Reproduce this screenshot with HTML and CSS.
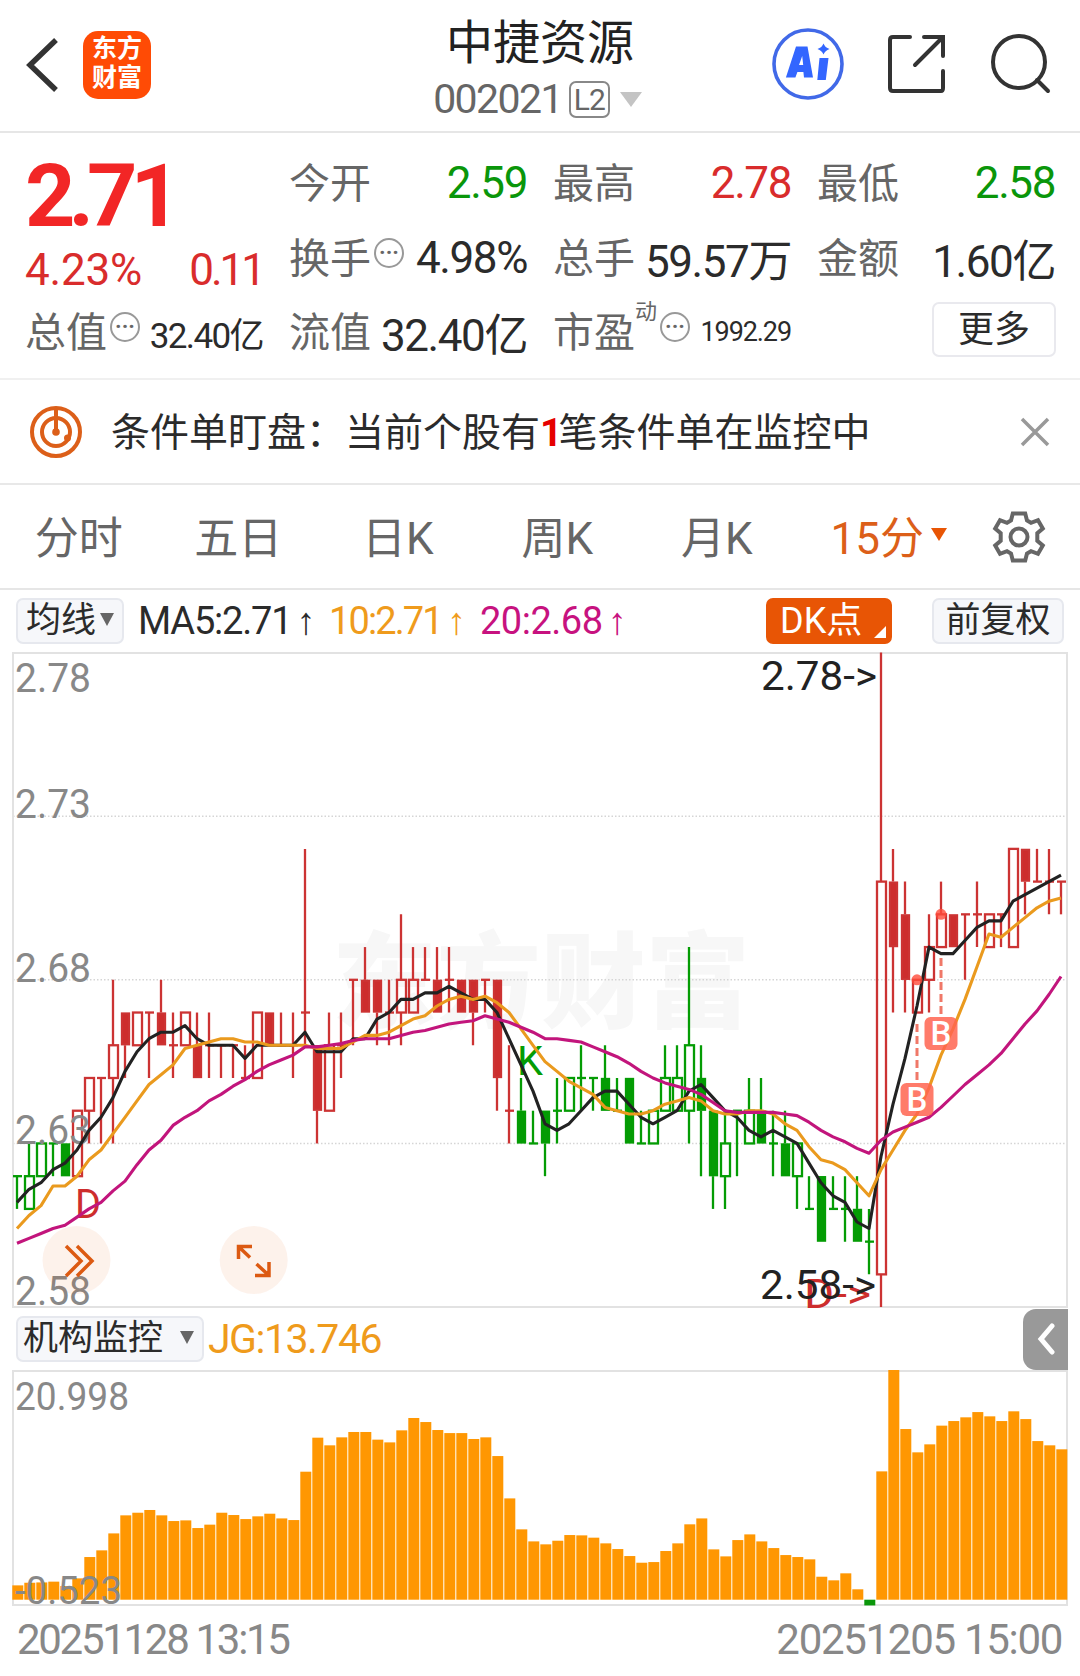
FILE: index.html
```html
<!DOCTYPE html>
<html lang="zh-CN">
<head>
    <meta charset="UTF-8">
    <title>中捷资源 002021</title>
    <meta name="viewport" content="width=device-width, initial-scale=1.0">
    <link rel="stylesheet" href="styles.css">
</head>
<body>
    <header class="header">
        <div class="header-left">
            <svg class="back" width="34" height="56" viewBox="0 0 34 56"><path d="M31 3 L5 28 L31 53"/></svg>
            <div class="logo"><span>东方</span><span>财富</span></div>
        </div>
        <div class="header-title">
            <h1>中捷资源</h1>
            <div class="code"><span class="code-num">002021</span><span class="level">L2</span><i class="tri tri-light"></i></div>
        </div>
        <div class="header-right">
            <svg width="72" height="72" viewBox="0 0 72 72">
                <circle cx="36" cy="36" r="34" fill="none" stroke="#4169e8" stroke-width="3.6"/>
                <path fill="#3366ff" fill-rule="evenodd" d="M24 18.500h11.500l5.500 31h-9l-.6-5.500h-6l-2 5.500h-9.500zM27 37h4.200l-1-9z"/>
                <path fill="#3366ff" d="M47.500 30h9l-2.700 22h-8.500zM51.500 15.500q1.500 4 6 5.500q-4.500 1.500-6 5.500q-1.500-4-6-5.500q4.500-1.500 6-5.500z"/>
            </svg>
            <svg class="line-icon" width="60" height="60" viewBox="0 0 60 60"><path d="M23 3H6Q3 3 3 6V54Q3 57 6 57H54Q56 57 56 54V37M37 3H56V22M55 4L28 31"/></svg>
            <svg class="line-icon" width="62" height="62" viewBox="0 0 62 62"><circle cx="29" cy="29" r="26"/><path d="M47 47L58 58"/></svg>
        </div>
    </header>

    <section class="quote">
        <div class="price">2.71</div>
        <div class="cell"><span class="label">今开</span><b class="green">2.59</b></div>
        <div class="cell"><span class="label">最高</span><b class="red">2.78</b></div>
        <div class="cell"><span class="label">最低</span><b class="green">2.58</b></div>

        <div class="cell change red"><b>4.23%</b><b class="diff">0.11</b></div>
        <div class="cell"><span class="label">换手<i class="more-dot">···</i></span><b>4.98%</b></div>
        <div class="cell"><span class="label">总手</span><b>59.57万</b></div>
        <div class="cell"><span class="label">金额</span><b>1.60亿</b></div>

        <div class="cell"><span class="label">总值<i class="more-dot">···</i></span><b class="mid">32.40亿</b></div>
        <div class="cell"><span class="label">流值</span><b>32.40亿</b></div>
        <div class="cell"><span class="label">市盈<sup>动</sup><i class="more-dot">···</i></span><b class="small">1992.29</b></div>
        <div class="cell end"><button class="more-btn">更多</button></div>
    </section>

    <section class="alert">
        <svg class="alert-icon" width="52" height="52" viewBox="0 0 52 52">
            <circle cx="26" cy="26" r="24"/><circle cx="26" cy="26" r="14"/>
            <path d="M26 2V25"/><circle class="dot" cx="26" cy="26" r="3.800"/><circle class="dot" cx="37.500" cy="32" r="3.500"/>
        </svg>
        <p>条件单盯盘：当前个股有<em>1</em>笔条件单在监控中</p>
        <svg class="close" width="30" height="30" viewBox="0 0 30 30"><path d="M2 2L28 28M28 2L2 28"/></svg>
    </section>

    <nav class="tabs">
        <a>分时</a><a>五日</a><a>日K</a><a>周K</a><a>月K</a>
        <a class="active">15分<i class="tri tri-orange"></i></a>
        <span class="gear">
            <svg width="54" height="54" viewBox="-27 -27 54 54">
                <path d="M-6.200 -23.500H6.200L8 -16.500L12 -14.200L19 -16.800L23.800 -8.500L18.300 -3.800V3.800L23.800 8.500L19 16.800L12 14.200L8 16.500L6.200 23.500H-6.200L-8 16.500L-12 14.200L-19 16.800L-23.800 8.500L-18.300 3.800V-3.800L-23.800 -8.500L-19 -16.800L-12 -14.200L-8 -16.500Z"/>
                <circle r="8.500"/>
            </svg>
        </span>
    </nav>

    <div class="toolbar">
        <button class="chip chip-ma">均线<i class="tri tri-dark"></i></button>
        <span class="ma ma5">MA5:2.71<u>↑</u></span>
        <span class="ma ma10">10:2.71<u>↑</u></span>
        <span class="ma ma20">20:2.68<u>↑</u></span>
        <button class="chip chip-dk">DK点</button>
        <button class="chip chip-fq">前复权</button>
    </div>

    <svg id="kline" class="chart" width="1080" height="656" viewBox="0 0 1080 656"></svg>

    <div class="toolbar sub">
        <button class="chip chip-jg">机构监控<i class="tri tri-dark"></i></button>
        <span class="jg">JG:13.746</span>
        <button class="collapse"><svg width="18" height="32" viewBox="0 0 18 32"><path d="M15 3L4 16L15 29"/></svg></button>
    </div>

    <svg id="monitor" class="chart" width="1080" height="237" viewBox="0 0 1080 237"></svg>

    <footer class="dates"><span class="from">20251128 13:15</span><span class="to">20251205 15:00</span></footer>

    <script src="chart.js"></script>
</body>
</html>
```
FILE: styles.css
```css
* {
    box-sizing: border-box;
    margin: 0;
    padding: 0;
}

body {
    width: 1080px;
    height: 1676px;
    overflow: hidden;
    background: #fff;
    color: #2b2b2b;
    font-family: Roboto, "Noto Sans CJK SC", sans-serif;
}

button {
    font-family: inherit;
    color: inherit;
}

i, em {
    font-style: normal;
}

.red { color: #d92c2c; }
.green { color: #0a960a; }

/* Triangles */
.tri {
    display: inline-block;
    border-style: solid;
    border-color: transparent;
    border-bottom-width: 0;
}

.tri-light {
    border-width: 15px 11px 0;
    border-top-color: #c4c4c4;
    margin-left: 10px;
}

.tri-orange {
    border-width: 13px 8px 0;
    border-top-color: #e85505;
    margin-left: 7px;
}

.tri-dark {
    border-width: 13px 7px 0;
    border-top-color: #666;
}

/* Header */
.header {
    display: grid;
    grid-template-columns: 380px 320px 380px;
    height: 133px;
    border-bottom: 2px solid #e6e6e6;
}

.header-left {
    display: flex;
    align-items: center;
    padding: 0 0 2px 25px;
}

.back {
    fill: none;
    stroke: #333;
    stroke-width: 5.5;
}

.logo {
    display: flex;
    flex-direction: column;
    align-items: center;
    justify-content: center;
    width: 68px;
    height: 68px;
    padding-bottom: 3px;
    margin-left: 24px;
    border-radius: 15px;
    background: #ff4b05;
    color: #fff;
    font-size: 25px;
    font-weight: 700;
    line-height: 29px;
}

.header-title {
    text-align: center;
}

.header-title h1 {
    height: 74px;
    line-height: 85px;
    font-size: 47px;
    font-weight: 400;
    color: #222;
}

.code {
    display: flex;
    align-items: center;
    justify-content: center;
    height: 50px;
    padding-right: 5px;
    color: #666;
}

.code-num {
    font-size: 41px;
    letter-spacing: -1.6px;
}

.level {
    width: 41px;
    height: 37px;
    margin-left: 7px;
    border: 2px solid #888;
    border-radius: 7px;
    font-size: 30px;
    line-height: 34px;
    letter-spacing: -1px;
}

.header-right {
    display: flex;
    align-items: center;
    justify-content: flex-end;
    gap: 43px;
    padding: 0 28px 3px 0;
}

.line-icon {
    fill: none;
    stroke: #333;
    stroke-width: 4;
    stroke-linecap: round;
}

/* Quote */
.quote {
    display: grid;
    grid-template-columns: repeat(4, 237px);
    grid-template-rows: 76px 74px 74px;
    column-gap: 27px;
    height: 247px;
    padding: 12px 25px 0;
    border-bottom: 2px solid #f0f0f0;
}

.price {
    align-self: center;
    padding-top: 26px;
    color: #f22626;
    font-size: 88px;
    font-weight: 700;
    line-height: 76px;
    letter-spacing: -7px;
}

.cell {
    display: flex;
    align-items: center;
    justify-content: space-between;
    white-space: nowrap;
}

.change {
    padding-top: 24px;
}

.end {
    justify-content: flex-end;
}

.label {
    display: flex;
    align-items: center;
    padding-bottom: 6px;
    font-size: 41px;
    color: #666;
}

.cell b {
    margin-right: -1px;
    font-size: 44px;
    font-weight: 400;
    letter-spacing: -1.4px;
}

.cell.change b {
    letter-spacing: -0.2px;
}

.cell.change .diff {
    letter-spacing: -3px;
}

.cell b.mid {
    font-size: 35px;
    letter-spacing: -1.6px;
}

.cell b.small {
    font-size: 27px;
    letter-spacing: -1.1px;
}

.label sup {
    align-self: flex-start;
    font-size: 22px;
    line-height: 26px;
}

.more-dot {
    width: 30px;
    height: 30px;
    margin: -5px 0 0 3px;
    border: 2px solid #999;
    border-radius: 50%;
    font-size: 22px;
    font-weight: 700;
    line-height: 25px;
    text-align: center;
}

.more-btn {
    width: 124px;
    height: 55px;
    margin: -5px -2px 0 0;
    border: 2px solid #e9e9ee;
    border-radius: 7px;
    background: #fff;
    font-size: 36px;
    line-height: 48px;
}

/* Alert */
.alert {
    display: flex;
    align-items: center;
    height: 105px;
    padding: 0 30px 0 30px;
    border-bottom: 2px solid #e8e8e8;
}

.alert-icon {
    fill: none;
    stroke: #dc5f19;
    stroke-width: 4;
}

.alert-icon .dot {
    fill: #dc5f19;
    stroke: none;
}

.alert p {
    flex: 1;
    padding-bottom: 6px;
    margin-left: 29px;
    font-size: 39px;
    white-space: nowrap;
}

.alert em {
    color: #e60000;
    font-weight: 700;
    letter-spacing: -4px;
}

.close {
    fill: none;
    stroke: #999;
    stroke-width: 3.5;
}

/* Tabs */
.tabs {
    display: grid;
    grid-template-columns: repeat(6, 159.5px) 1fr;
    align-items: center;
    height: 105px;
    border-bottom: 2px solid #e6e6e6;
    color: #666;
    font-size: 44px;
    text-align: center;
}

.tabs a {
    padding-bottom: 4px;
    margin-left: -2px;
}

.tabs .active {
    display: flex;
    align-items: center;
    padding-left: 35px;
    color: #dc5f19;
}

.gear {
    height: 54px;
    fill: none;
    stroke: #666;
    stroke-width: 4;
    line-height: 0;
}

/* Indicator bars */
.toolbar {
    display: flex;
    align-items: center;
    height: 62px;
    padding: 0 16px;
    font-size: 38px;
}

.chip {
    display: flex;
    align-items: center;
    height: 46px;
    border: 2px solid #e6e8ee;
    border-radius: 7px;
    background: #f6f7fa;
    font-size: 35px;
    line-height: 44px;
    white-space: nowrap;
}

.chip-ma {
    width: 108px;
    padding-left: 8px;
}

.chip-ma .tri {
    margin: 0 0 3px 4px;
}

.ma {
    letter-spacing: -1.2px;
}

.ma u {
    margin-left: 5px;
    font-family: "Liberation Sans", sans-serif;
    font-weight: 700;
    text-decoration: none;
}

.ma5 {
    width: 191px;
    margin-left: 14px;
}

.ma10 {
    width: 151px;
    color: #ef9b1c;
    letter-spacing: -1.9px;
}

.ma20 {
    color: #c7127f;
    letter-spacing: -0.5px;
}

.chip-dk {
    position: relative;
    width: 126px;
    margin-left: auto;
    padding-left: 12px;
    border-color: #e85505;
    background: #e85505;
    color: #fff;
    font-size: 36px;
}

.chip-dk::after {
    content: '';
    position: absolute;
    right: 4px;
    bottom: 4px;
    border: 6px solid #fff;
    border-top-color: transparent;
    border-left-color: transparent;
}

.chip-fq {
    width: 132px;
    margin-left: 40px;
    justify-content: center;
}

.sub {
    height: 62px;
    padding-right: 12px;
}

.chip-jg {
    width: 188px;
    padding-left: 5px;
}

.chip-jg .tri {
    margin: 0 0 3px 17px;
}

.jg {
    margin-left: 4px;
    color: #ef9b1c;
    font-size: 41px;
    letter-spacing: -1.5px;
}

.collapse {
    display: flex;
    align-items: center;
    justify-content: center;
    width: 45px;
    height: 61px;
    margin-left: auto;
    border: 0;
    border-radius: 13px 0 0 13px;
    background: #999;
}

.collapse path {
    fill: none;
    stroke: #fff;
    stroke-width: 5;
    stroke-linecap: round;
}

/* Charts */
.chart {
    display: block;
}

.frame {
    fill: none;
    stroke: #e2e2e2;
    stroke-width: 2;
}

.grid {
    stroke: #d5d5d5;
    stroke-width: 1.5;
    stroke-dasharray: 1.5 2;
}

.watermark {
    fill: #f7f7f7;
    font-size: 104px;
    font-weight: 900;
}

.axis {
    fill: #888;
    font-size: 41px;
}

.axis.low {
    font-size: 38px;
}

.mark {
    font-size: 40px;
    fill: #222;
}

.up { stroke: #cc3333; fill: #fff; }
.down { stroke: #049c04; fill: #fff; }
.up.solid, .up.sign { fill: #cd2d2d; }
.down.solid, .down.sign { fill: #049c04; }

.candle {
    stroke-width: 2.3;
}

.hollow {
    fill: none;
}

.sign {
    stroke: none;
    font-size: 40px;
}

.line {
    fill: none;
    stroke-width: 3.1;
    stroke-linejoin: round;
}

.line5 { stroke: #222; }
.line10 { stroke: #ea9a1e; }
.line20 { stroke: #c2157c; }

.buy rect { fill: #ff6450; opacity: 0.85; }
.buy circle { fill: #ff4b3a; opacity: 0.8; }
.buy path { stroke: #f07868; stroke-width: 3; stroke-dasharray: 8 4; }
.buy text { fill: #fff; font-size: 33px; font-weight: 500; text-anchor: middle; }

.tool circle { fill: #e85505; opacity: 0.08; }
.tool path { fill: none; stroke: #dc5a12; stroke-width: 3.5; }

.bar { fill: #ff9702; }
.bar.neg { fill: #0a960a; }

/* Dates */
.dates {
    display: flex;
    justify-content: space-between;
    padding: 0 18px 0 17px;
    color: #888;
    font-size: 42px;
    line-height: 65px;
}

.from { letter-spacing: -2.3px; }
.to { letter-spacing: -1.3px; }
```
FILE: chart.js
```js
// side, open, close, high, low (prices in cents)
const candles = `
g 262 262 262 261|g 261 262 263 261|g 262 263 263 262|g 263 263 263 262|g 263 262 263 262|r 262 264 264 262
r 264 265 265 263|r 265 265 265 263|r 265 266 268 263|r 267 266 267 265|r 266 267 267 266|r 267 267 267 265
r 267 266 268 266|r 266 266 267 265|r 266 267 267 266|r 266 265 267 265|r 266 266 267 265|r 266 266 266 265
r 266 266 266 265|r 265 265 266 265|r 265 267 267 265|r 267 266 267 266|r 266 266 267 266|r 266 266 267 265
r 267 267 272 266|r 266 264 266 263|r 264 266 267 264|r 266 266 267 265|r 268 268 268 266|r 268 267 269 267
r 268 267 268 266|r 267 267 268 266|r 267 268 270 266|r 267 268 269 267|r 268 268 269 268|r 268 267 269 267
r 268 268 269 267|r 268 267 268 267|r 268 267 268 266|r 268 268 268 267|r 268 265 268 264|r 264 264 266 263
g 264 263 265 263|g 263 263 264 263|g 264 263 264 262|g 264 264 265 263|g 264 265 265 264|g 265 265 266 264
g 265 265 265 264|g 265 264 266 264|g 264 264 265 264|g 265 263 265 263|g 263 263 264 263|g 263 264 264 263
g 264 265 266 264|g 264 265 266 264|g 264 266 269 263|g 265 264 266 262|g 264 262 264 261|g 262 263 264 261
g 264 264 264 262|g 263 264 265 263|g 264 263 265 263|g 263 263 264 262|g 263 262 264 262|g 262 263 263 261
g 261 261 262 261|g 262 260 262 260|g 261 261 262 261|g 261 261 262 260|g 261 260 262 260|g 260 260 261 259
r 259 271 278 258|r 271 269 272 267|r 270 268 271 267|r 267 268 268 267|r 268 269 270 267|r 269 270 271 269
r 270 269 270 269|r 270 270 270 268|r 270 270 271 269|r 269 270 270 269|r 270 270 270 269|r 269 272 272 269
r 272 271 272 270|r 271 271 272 271|r 271 271 272 270|r 271 271 271 270`
    .trim().split(/[|\n]/).map(row => {
        const [side, ...v] = row.split(' ');
        const [open, close, high, low] = v.map(Number);
        return { side, open, close, high, low };
    });

// Closes before the first visible candle, for the averages
const before = [259, 260, 260, 260, 259, 260, 261, 259, 260, 257, 258, 260, 257, 262, 261, 260, 262, 261, 261];

const monitor = [
    1.31, 1.55, 1.58, 1.65, 1.25, 1.95, 3.9, 4.51, 6.06, 7.71, 7.95, 8.2, 7.71, 7.19, 7.25, 6.55, 6.86, 7.95, 7.74, 7.37,
    7.62, 7.86, 7.43, 7.28, 11.7, 14.81, 14.11, 14.84, 15.33, 15.33, 14.63, 14.38, 15.48, 16.61, 16.24, 15.51, 15.23, 15.23,
    14.69, 14.84, 13.13, 9.26, 6.43, 5.33, 5.06, 5.39, 5.91, 5.88, 5.67, 5.15, 4.63, 3.99, 3.38, 3.44, 4.45, 5.15, 6.89,
    7.43, 4.6, 3.96, 5.45, 5.97, 5.33, 4.72, 4.08, 3.9, 3.69, 2.1, 1.77, 2.41, 0.95, -0.523, 11.73, 20.998, 15.6, 13.47,
    14.2, 15.91, 16.33, 16.67, 17.15, 16.76, 16.33, 17.22, 16.51, 14.5, 14.11, 13.746
];

const x = i => 17 + i * 12;
const y = p => 0.5 + (278 - p) * 32.73;

function text(cls, tx, ty, width, str) {
    return `<text class="${cls}" x="${tx}" y="${ty}" textLength="${width}" lengthAdjust="spacingAndGlyphs">${str}</text>`;
}

function candle(c, i) {
    const cls = c.side === 'r' ? 'up' : 'down';
    const top = y(Math.max(c.open, c.close));
    const bottom = y(Math.min(c.open, c.close));
    const wick = `M${x(i)} ${y(c.high)}V${top}M${x(i)} ${bottom}V${y(c.low)}`;
    let out = `<path class="candle ${cls}" d="${wick}"/>`;
    if (c.open === c.close) {
        out += `<path class="candle ${cls}" d="M${x(i) - 4} ${top}h9"/>`;
    } else if (c.close > c.open) {
        out += `<rect class="candle hollow ${cls}" x="${x(i) - 4}" y="${top}" width="9" height="${bottom - top}"/>`;
    } else {
        out += `<rect class="candle solid ${cls}" x="${x(i) - 3}" y="${top + 1}" width="7" height="${bottom - top - 2}"/>`;
    }
    return out;
}

function average(n) {
    const all = before.concat(candles.map(c => c.close));
    const points = candles.map((c, i) => {
        const end = before.length + i + 1;
        const sum = all.slice(end - n, end).reduce((a, b) => a + b, 0);
        return x(i) + ',' + y(sum / n).toFixed(1);
    });
    return `<polyline class="line line${n}" points="${points.join(' ')}"/>`;
}

function buy(cx, price, top) {
    const cy = y(price);
    return `<g class="buy"><circle cx="${cx}" cy="${cy}" r="5.5"/><path d="M${cx} ${top - 59}V${top - 3}"/>
        <rect x="${cx - 16.5}" y="${top}" width="33" height="33" rx="6"/><text x="${cx}" y="${top + 28}">B</text></g>`;
}

document.getElementById('kline').innerHTML =
    text('watermark', 332, 368, 418, '东方财富') +
    [273, 268, 263].map(p => `<path class="grid" d="M13 ${y(p)}H1067"/>`).join('') +
    '<rect class="frame" x="13" y="1" width="1054" height="654"/>' +
    candles.map(candle).join('') +
    text('sign up', 75, 566, 26, 'D') +
    text('sign down', 517, 423, 26, 'K') +
    text('sign up', 804, 656, 67, 'D-&gt;') +
    text('axis', 15, 40, 76, '2.78') +
    text('axis', 15, 166, 76, '2.73') +
    text('axis', 15, 330, 76, '2.68') +
    text('axis', 15, 492, 76, '2.63') +
    text('axis', 15, 653, 76, '2.58') +
    average(5) + average(10) + average(20) +
    text('mark', 761, 38, 116, '2.78-&gt;') +
    text('mark', 760, 647, 116, '2.58-&gt;') +
    buy(917, 268, 431) + buy(941, 270, 365) +
    `<g class="tool"><circle cx="76.5" cy="608" r="34"/><path d="M66 594L81 609L66 624M77 594L92 609L77 624"/></g>
     <g class="tool"><circle cx="253.7" cy="608" r="34"/>
     <path d="M238.500 607V594.500H252M239 595L250 605.500M269 610V623.500H255M268.500 623L256.500 612"/></g>`;

document.getElementById('monitor').innerHTML =
    '<rect class="frame" x="13" y="1" width="1054" height="234"/>' +
    monitor.map((v, i) => {
        const h = Math.abs(v) * 10.94;
        return `<rect class="bar${v < 0 ? ' neg' : ''}" x="${x(i) - 4.7}" y="${v < 0 ? 229.7 : 229.7 - h}" width="11" height="${h}"/>`;
    }).join('') +
    text('axis low', 15, 39.500, 114, '20.998') +
    text('axis low', 15, 234, 107, '-0.523');
```
